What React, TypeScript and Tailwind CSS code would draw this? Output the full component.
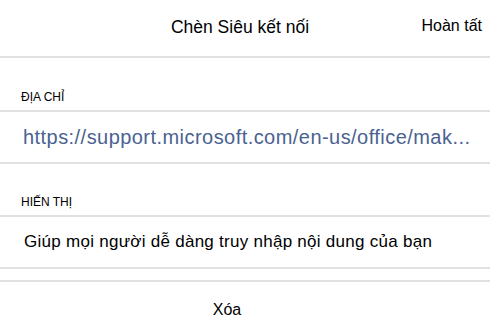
const Divider = () => <div className="h-[2px] bg-[#e1e1e1]" />;

const App = () => {
  return (
    <div className="w-[490px] h-[327px] bg-white overflow-hidden font-['Liberation_Sans',Arial,sans-serif] text-black">
      <header className="relative h-[56px] flex items-center justify-center pr-[10px]">
        <span className="text-[17.5px] mt-[-2px]">Chèn Siêu kết nối</span>
        <span className="absolute right-[8px] top-[14px] text-[16px]">Hoàn tất</span>
      </header>
      <Divider />

      <div className="h-[52px] flex items-end pl-[21px] pb-[7px] text-[12px] leading-none">ĐỊA CHỈ</div>
      <Divider />
      <div className="h-[50px] flex items-center pl-[23px] text-[20px] tracking-[0.45px] text-[#4a6291]">
        https://support.microsoft.com/en-us/office/mak...
      </div>
      <Divider />

      <div className="h-[51px] flex items-end pl-[21px] pb-[7px] text-[12px] leading-none">HIẾN THỊ</div>
      <Divider />
      <div className="h-[50px] flex items-center pl-[24px] text-[17px] tracking-[0.27px]">
        Giúp mọi người dễ dàng truy nhập nội dung của bạn
      </div>
      <Divider />

      <div className="h-[11px]" />
      <Divider />
      <div className="h-[46px] flex items-center justify-center pr-[36px] pt-[10px] text-[16px]">Xóa</div>
    </div>
  );
};

export default App;
